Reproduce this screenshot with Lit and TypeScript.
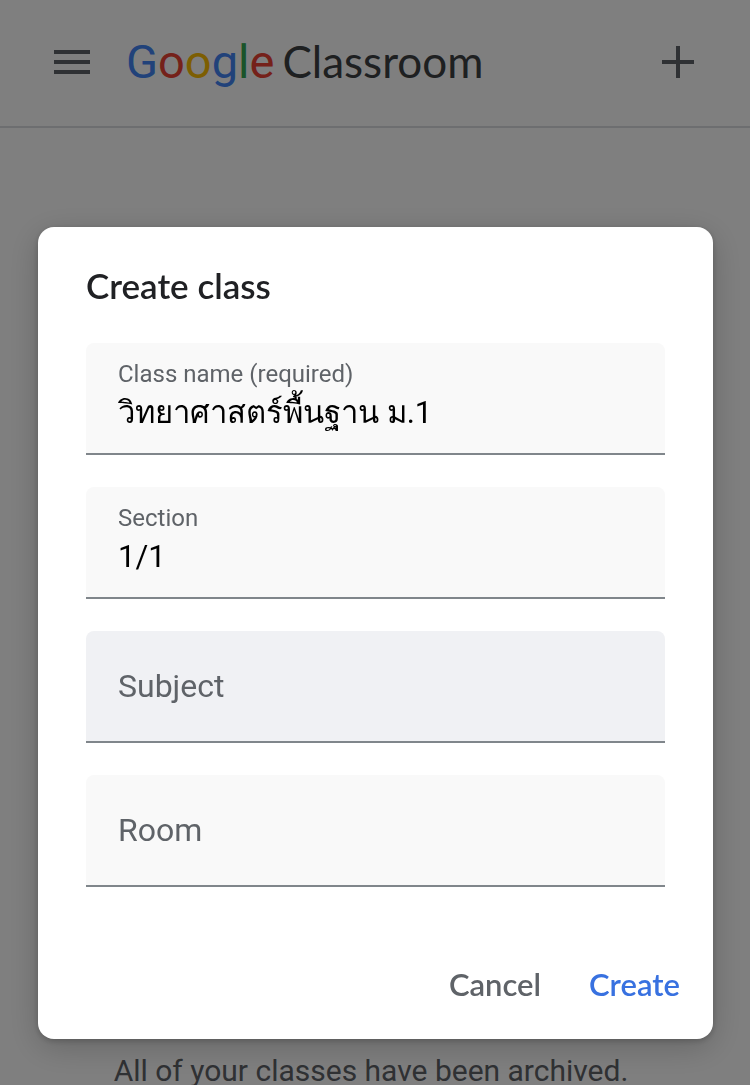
import { LitElement, html, css } from "lit";
import { customElement, property, state } from "lit/decorators.js";
import { classMap } from "lit/directives/class-map.js";

@customElement("text-field")
class TextField extends LitElement {
  @property() label = "";
  @property() value = "";
  @property({ type: Boolean }) hovered = false;

  static styles = css`
    :host {
      display: block;
    }
    .field {
      display: grid;
      background: #f9f9f9;
      border-bottom: 2px solid #80868b;
      border-radius: 8px 8px 0 0;
      overflow: hidden;
    }
    .field:hover,
    .field.hovered {
      background: #f0f1f4;
    }
    .label,
    .input {
      grid-area: 1 / 1;
      font-family: Roboto, sans-serif;
    }
    .label {
      align-self: center;
      padding: 0 32px;
      font-size: 32px;
      line-height: 40px;
      color: #5f6368;
      pointer-events: none;
    }
    .filled .label {
      align-self: start;
      padding-top: 15px;
      font-size: 24px;
      line-height: 32px;
    }
    .input {
      box-sizing: border-box;
      width: 100%;
      height: 110px;
      margin: 0;
      padding: 28px 32px 0;
      border: 0;
      outline: 0;
      background: transparent;
      color: #000;
      font-size: 31px;
      line-height: 64px;
    }
  `;

  private onInput(e: Event) {
    this.value = (e.target as HTMLInputElement).value;
  }

  render() {
    return html`
      <div class=${classMap({ field: true, filled: this.value !== "", hovered: this.hovered })}>
        <input class="input" id="control" type="text" .value=${this.value} @input=${this.onInput} />
        <label class="label" for="control">${this.label}</label>
      </div>
    `;
  }
}

@customElement("app-root")
class AppRoot extends LitElement {
  @state() private fields = [
    { label: "Class name (required)", value: "วิทยาศาสตร์พื้นฐาน ม.1" },
    { label: "Section", value: "1/1" },
    { label: "Subject", value: "", hovered: true },
    { label: "Room", value: "" },
  ];

  static styles = css`
    :host {
      display: block;
      font-family: Roboto, sans-serif;
      color: #202124;
    }
    .page {
      display: flex;
      flex-direction: column;
      min-height: 100vh;
      background: #fff;
    }
    .bar {
      display: flex;
      align-items: center;
      height: 124px;
      padding: 0 48px 2px;
      border-bottom: 2px solid #dadce0;
    }
    .icon-button {
      display: grid;
      place-items: center;
      width: 48px;
      height: 48px;
      margin: 0;
      padding: 0;
      border: 0;
      background: none;
      color: #5f6368;
    }
    .brand {
      display: flex;
      align-items: baseline;
      gap: 8px;
      flex: 1;
      margin-left: 30px;
      padding-bottom: 2px;
      font-family: Lato, sans-serif;
      line-height: 60px;
      color: #3c4043;
      text-decoration: none;
    }
    .google {
      font-family: Roboto, sans-serif;
      font-size: 47px;
      font-weight: 400;
    }
    .product {
      font-size: 44px;
    }
    .blue {
      color: #4285f4;
    }
    .red {
      color: #ea4335;
    }
    .yellow {
      color: #fbbc04;
    }
    .green {
      color: #34a853;
    }
    .main {
      display: grid;
      flex: 1;
      align-items: end;
      justify-items: center;
      padding-right: 8px;
    }
    .notice {
      margin: 0;
      font-size: 30px;
      line-height: 28px;
      color: #5f6368;
    }
    .scrim {
      position: fixed;
      inset: 0;
      overflow: hidden;
      padding: 227px 37px 0 38px;
      background: rgba(0, 0, 0, 0.5);
    }
    .dialog {
      border-radius: 16px;
      background: #fff;
      box-shadow: 0 2px 6px rgba(0, 0, 0, 0.2), 0 8px 32px rgba(0, 0, 0, 0.2);
    }
    .title {
      margin: 0;
      padding: 38px 48px;
      font-family: Lato, sans-serif;
      font-size: 35px;
      font-weight: 600;
      line-height: 40px;
    }
    .fields {
      display: grid;
      gap: 32px;
      padding: 0 48px;
    }
    .actions {
      display: flex;
      justify-content: flex-end;
      gap: 16px;
      padding: 61px 17px 19px;
    }
    .action {
      height: 72px;
      margin: 0;
      padding: 0 16px;
      border: 0;
      border-radius: 8px;
      background: none;
      font-family: Lato, sans-serif;
      font-size: 31px;
      font-weight: 600;
      color: #5f6368;
    }
    .primary {
      color: #3871e0;
    }
  `;

  render() {
    return html`
      <div class="page">
        <header class="bar">
          <button class="icon-button" aria-label="Main menu">
            <svg width="36" height="24" viewBox="0 0 36 24" fill="currentColor">
              <path d="M0 0h36v4H0zM0 10h36v4H0zM0 20h36v4H0z" />
            </svg>
          </button>
          <a class="brand" href="#">
            <span class="google"
              ><span class="blue">G</span><span class="red">o</span><span class="yellow">o</span
              ><span class="blue">g</span><span class="green">l</span><span class="red">e</span></span
            >
            <span class="product">Classroom</span>
          </a>
          <button class="icon-button" aria-label="Create or join a class">
            <svg width="32" height="32" viewBox="0 0 32 32" fill="currentColor">
              <path d="M14 0h4v14h14v4H18v14h-4V18H0v-4h14z" />
            </svg>
          </button>
        </header>
        <main class="main">
          <p class="notice">All of your classes have been archived.</p>
        </main>
      </div>
      <div class="scrim">
        <form class="dialog" role="dialog" aria-labelledby="title" @submit=${(e: Event) => e.preventDefault()}>
          <h1 class="title" id="title">Create class</h1>
          <div class="fields">
            ${this.fields.map(
              (f) => html`<text-field .label=${f.label} .value=${f.value} .hovered=${!!f.hovered}></text-field>`
            )}
          </div>
          <div class="actions">
            <button class="action" type="button">Cancel</button>
            <button class="action primary" type="submit">Create</button>
          </div>
        </form>
      </div>
    `;
  }
}
